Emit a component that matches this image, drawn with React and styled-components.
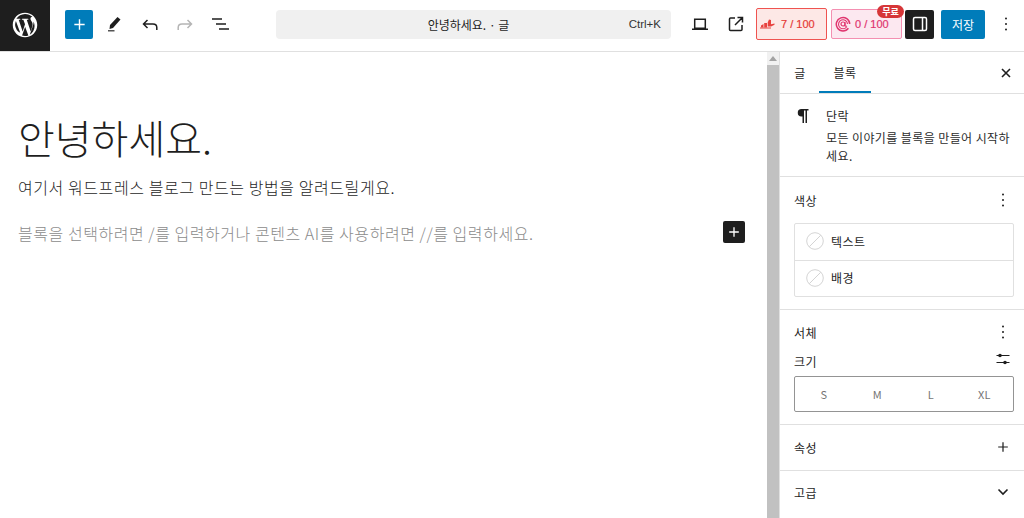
import styled, { createGlobalStyle } from "styled-components";

const GlobalStyle = createGlobalStyle`
  html, body {
    margin: 0;
    padding: 0;
    height: 100%;
    overflow: hidden;
    background: #fff;
  }
  * { box-sizing: border-box; }
  body {
    font-family: "Noto Sans CJK KR", "Noto Sans", sans-serif;
    color: #1e1e1e;
  }
`;

const Page = styled.div`
  width: 1024px;
  height: 518px;
  display: flex;
  flex-direction: column;
`;

const Header = styled.header`
  height: 52px;
  flex: none;
  display: flex;
  align-items: center;
  padding-bottom: 3px;
  border-bottom: 1px solid #e0e0e0;
`;

const LogoBox = styled.div`
  width: 50px;
  height: 51px;
  margin-bottom: -3px;
  padding-bottom: 2px;
  background: #1e1e1e;
  display: flex;
  align-items: center;
  justify-content: center;
  flex: none;
`;

const LeftTools = styled.div`
  width: 226px;
  flex: none;
  display: flex;
  align-items: center;
  padding-left: 15px;
`;

const PrimarySquare = styled.div`
  width: 28px;
  height: 29px;
  background: #007cba;
  border-radius: 2px;
  display: flex;
  align-items: center;
  justify-content: center;
  margin-right: 3px;
`;

const ToolIcon = styled.div`
  width: ${(p) => p.$w || 36}px;
  height: 36px;
  display: flex;
  align-items: center;
  justify-content: center;
  flex: none;
`;

const CommandBar = styled.div`
  width: 395px;
  height: 29px;
  flex: none;
  background: #f0f0f0;
  border-radius: 4px;
  display: flex;
  align-items: center;
  position: relative;
  justify-content: center;
  font-size: 12px;
  color: #1e1e1e;
  padding-right: 10px;
`;

const Shortcut = styled.span`
  position: absolute;
  right: 10px;
  font-family: "Liberation Sans", sans-serif;
  font-size: 11.5px;
  color: #333;
`;

const RightTools = styled.div`
  display: flex;
  align-items: center;
  margin-left: 11px;
`;

const ScoreBadge = styled.div`
  position: relative;
  width: 71px;
  height: ${(p) => p.$h}px;
  border-radius: 2px;
  border: 1px solid ${(p) => p.$line};
  background: ${(p) => p.$fill};
  color: ${(p) => p.$ink};
  display: flex;
  align-items: center;
  gap: ${(p) => p.$space}px;
  padding-left: 3px;
  margin-left: ${(p) => p.$gap || 0}px;
  font-family: "Liberation Sans", sans-serif;
  font-size: 11px;
  -webkit-text-stroke: 0.2px ${(p) => p.$ink};
  flex: none;
`;

const FreeTag = styled.span`
  position: absolute;
  top: -5px;
  right: -3px;
  width: 27px;
  height: 13px;
  border-radius: 7px;
  background: #d63638;
  color: #fff;
  -webkit-text-stroke: 0;
  font-family: "Noto Sans CJK KR", sans-serif;
  font-size: 9px;
  font-weight: 700;
  line-height: 13px;
  text-align: center;
`;

const SidebarToggle = styled.div`
  width: 29px;
  height: 29px;
  margin-left: 3px;
  background: #1e1e1e;
  border-radius: 2px;
  display: flex;
  align-items: center;
  justify-content: center;
  flex: none;
`;

const SaveButton = styled.div`
  width: 44px;
  height: 29px;
  margin-left: 7px;
  background: #007cba;
  border-radius: 2px;
  color: #fff;
  font-size: 12px;
  display: flex;
  align-items: center;
  justify-content: center;
  flex: none;
`;

const MoreSlot = styled.div`
  width: 24px;
  margin-left: 9px;
  display: flex;
  align-items: center;
  justify-content: center;
  flex: none;
`;

const Body = styled.div`
  flex: 1;
  display: flex;
  min-height: 0;
`;

const Editor = styled.main`
  width: 767px;
  flex: none;
  padding: 57px 22px 0 18px;
`;

const Title = styled.h1`
  margin: 0;
  font-size: 40px;
  font-weight: 300;
  line-height: 56px;
  color: #1e1e1e;
`;

const Paragraph = styled.p`
  margin: 11px 0 0;
  font-size: 16px;
  font-weight: 300;
  letter-spacing: 0.58px;
  line-height: 22px;
  color: #1e1e1e;
`;

const PlaceholderRow = styled.div`
  margin-top: 22px;
  height: 26px;
  display: flex;
  align-items: center;
  justify-content: space-between;
`;

const Placeholder = styled.span`
  font-size: 16px;
  font-weight: 300;
  letter-spacing: 0.55px;
  color: #8b8b8b;
`;

const InsertButton = styled.div`
  width: 22px;
  height: 22px;
  margin-bottom: 2px;
  background: #1e1e1e;
  border-radius: 2px;
  display: flex;
  align-items: center;
  justify-content: center;
`;

const ScrollTrack = styled.div`
  width: 12px;
  flex: none;
  background: #f1f1f1;
  display: flex;
  flex-direction: column;
  align-items: center;
`;

const ScrollArrow = styled.div`
  height: 13px;
  flex: none;
  display: flex;
  align-items: center;
  justify-content: center;
`;

const ScrollThumb = styled.div`
  width: 12px;
  flex: 1;
  background: #c1c1c1;
`;

const Sidebar = styled.aside`
  flex: 1;
  border-left: 1px solid #e0e0e0;
  display: flex;
  flex-direction: column;
  font-size: 12px;
  letter-spacing: 0.4px;
`;

const Tabs = styled.div`
  height: 42px;
  flex: none;
  display: flex;
  align-items: stretch;
  border-bottom: 1px solid #e0e0e0;
  padding-left: 1px;
`;

const Tab = styled.div`
  width: ${(p) => p.$w}px;
  display: flex;
  align-items: center;
  justify-content: center;
  box-shadow: ${(p) => (p.$active ? "inset 0 -2px 0 #007cba" : "none")};
`;

const CloseSlot = styled.div`
  margin-left: auto;
  width: 36px;
  display: flex;
  align-items: center;
  justify-content: center;
`;

const BlockCard = styled.section`
  height: 83px;
  flex: none;
  display: flex;
  padding: 14px 10px 0 16px;
  border-bottom: 1px solid #e0e0e0;
`;

const BlockIcon = styled.div`
  width: 30px;
  flex: none;
`;

const BlockName = styled.div`
  line-height: 16px;
`;

const BlockDesc = styled.div`
  margin-top: 5px;
  line-height: 18px;
  color: #2c2c2c;
`;

const Panel = styled.section`
  height: ${(p) => p.$h}px;
  flex: none;
  padding: 0 10px 0 14px;
  border-bottom: ${(p) => (p.$last ? "none" : "1px solid #e0e0e0")};
`;

const PanelHead = styled.div`
  height: ${(p) => p.$h}px;
  display: flex;
  align-items: center;
  justify-content: space-between;
  color: #1e1e1e;
`;

const HeadIcon = styled.div`
  width: 20px;
  margin-right: 1px;
  display: flex;
  align-items: center;
  justify-content: center;
`;

const ColorList = styled.div`
  border: 1px solid #e0e0e0;
  border-radius: 2px;
`;

const ColorRow = styled.div`
  height: 36px;
  display: flex;
  align-items: center;
  gap: 7px;
  padding: 0 0 2px 11px;
  border-top: ${(p) => (p.$first ? "none" : "1px solid #e0e0e0")};
`;

const SizeLabelRow = styled.div`
  height: 20px;
  margin-top: -3px;
  display: flex;
  align-items: center;
  justify-content: space-between;
`;

const SizeControl = styled.div`
  margin-top: 5px;
  height: 36px;
  border: 1px solid #949494;
  border-radius: 2px;
  display: grid;
  grid-template-columns: repeat(4, 53.5px);
  padding-left: 2px;
`;

const SizeOption = styled.div`
  display: flex;
  align-items: center;
  justify-content: center;
  font-size: 11px;
  letter-spacing: 0;
  color: #757575;
`;

const WpLogo = () => (
  <svg width="28" height="28" viewBox="0 0 24 24" fill="#fff">
    <path d="M12 1.500C6.200 1.500 1.500 6.200 1.500 12S6.200 22.500 12 22.500 22.500 17.800 22.500 12 17.800 1.500 12 1.500zm0 1c2.500 0 4.700 1 6.400 2.500h-.1c-.9 0-1.600.8-1.600 1.700 0 .8.5 1.400 1 2.200.4.6.8 1.400.8 2.600 0 .8-.3 1.700-.7 3l-.9 3.100-3.400-10.100c.6 0 1.100-.1 1.100-.1.5-.1.5-.8 0-.8 0 0-1.500.1-2.500.1-.9 0-2.400-.1-2.400-.1-.5 0-.6.8-.1.8 0 0 .5.1 1 .1l1.400 3.900-2 6.100-3.400-10c.6 0 1.100-.1 1.100-.1.5-.1.5-.8 0-.8 0 0-1.500.1-2.500.1h-.6A9.500 9.500 0 0 1 12 2.500zM3.500 12c0-1.200.3-2.400.7-3.400l3.700 10.100A8.500 8.500 0 0 1 3.500 12zm8.500 9.500c-.9 0-1.700-.1-2.500-.4l2.600-7.700 2.700 7.400c0 0 0 .1.1.1-.9.400-1.900.6-2.900.6zm4.100-1.200 2.600-7.500c.5-1.200.6-2.200.6-3 0-.3 0-.6-.1-.9.7 1.200 1 2.600 1 4.100 0 3.100-1.700 5.800-4.100 7.300z" />
  </svg>
);

const Plus = ({ size = 16, color = "#fff", width = 1.5 }) => (
  <svg width={size} height={size} viewBox="0 0 16 16" fill="none" stroke={color} strokeWidth={width}>
    <path d="M8 2.500v11M2.500 8h11" />
  </svg>
);

const Pencil = () => (
  <svg width="24" height="24" viewBox="0 0 24 24" fill="#1e1e1e">
    <path d="M15.500 5 18.500 7.500 11 16l-3.500 1 .5-4z" />
    <rect x="6" y="18" width="6.500" height="1.500" fill="#555" />
  </svg>
);

const Arrow = ({ color, flip }) => (
  <svg
    width="24"
    height="24"
    viewBox="0 0 24 24"
    fill="none"
    stroke={color}
    strokeWidth="1.500"
    style={flip ? { transform: "scaleX(-1)" } : undefined}
  >
    <path d="M9.500 8 5.500 12l4 4M5.500 12h9.500c2.200 0 3.800 1.400 3.800 3.500V18" />
  </svg>
);

const ListView = () => (
  <svg width="24" height="24" viewBox="0 0 24 24" fill="none" stroke="#1e1e1e" strokeWidth="1.500">
    <path d="M4 7h10M8 12h10M11 17h10" />
  </svg>
);

const Laptop = () => (
  <svg width="24" height="24" viewBox="0 0 24 24" fill="none" stroke="#1e1e1e" strokeWidth="1.500">
    <path d="M6.700 7.200h10.600v9H6.700zM4 17.200h16" />
  </svg>
);

const External = () => (
  <svg width="24" height="24" viewBox="0 0 24 24" fill="none" stroke="#1e1e1e" strokeWidth="1.500">
    <path d="M11 6H6.500A1 1 0 0 0 5.500 7v10.500a1 1 0 0 0 1 1H17a1 1 0 0 0 1-1V13M11 13l7.500-7.500M13.500 5.500h5v5" />
  </svg>
);

const ChartIcon = () => (
  <svg width="15" height="12" viewBox="0 0 15 12" fill="#e8423f">
    <path d="M1 7.500 3.500 6v3.500H1zM4.200 5H7v4.500H4.200zM7.700 4.500 9 1.500l2 .5v4.200l3.500-.7v1.300L11 8.500H7.700z" />
    <rect x="0" y="9.500" width="11" height="1" />
  </svg>
);

const TargetIcon = () => (
  <svg width="16" height="16" viewBox="0 0 16 16" fill="none" stroke="#e0356f">
    <path d="M13.400 12.200A6.700 6.700 0 1 1 14.700 8" strokeWidth="1.500" />
    <path d="M11.600 11A4.500 4.500 0 1 1 12.500 8" strokeWidth="1.100" />
    <circle cx="8" cy="8" r="2" strokeWidth="1.200" />
    <path d="M10 6v3.200c0 1 1.200 1.300 2 .8" strokeWidth="1.100" />
  </svg>
);

const SidebarIcon = () => (
  <svg width="20" height="20" viewBox="0 0 20 20" fill="none" stroke="#fff" strokeWidth="1.500">
    <rect x="3.500" y="3.500" width="13" height="13" rx="1.500" />
    <path d="M12.500 3.500v13" />
  </svg>
);

const Dots = () => (
  <svg width="4" height="16" viewBox="0 0 4 16" fill="#1e1e1e">
    <circle cx="2" cy="2.500" r="1" />
    <circle cx="2" cy="8" r="1" />
    <circle cx="2" cy="13.500" r="1" />
  </svg>
);

const Close = () => (
  <svg width="12" height="12" viewBox="0 0 12 12" fill="none" stroke="#1e1e1e" strokeWidth="1.600">
    <path d="M2 2l8 8M10 2l-8 8" />
  </svg>
);

const Pilcrow = () => (
  <svg width="14" height="16" viewBox="0 0 14 16" fill="#1e1e1e">
    <path d="M5.500 1h7v1.500H11V15H9.500V2.500H8V15H6.500V8.500h-1a3.750 3.750 0 0 1 0-7.500z" />
  </svg>
);

const NoColor = () => (
  <svg width="18" height="18" viewBox="0 0 18 18" fill="none" stroke="#d4d4d4" strokeWidth="1">
    <circle cx="9" cy="9" r="8.300" />
    <path d="M3.300 14.700 14.700 3.300" />
  </svg>
);

const Sliders = () => (
  <svg width="16" height="14" viewBox="0 0 16 14" fill="#1e1e1e" style={{ marginTop: -4 }}>
    <rect x="1.500" y="3" width="13" height="1" />
    <rect x="1.500" y="10" width="13" height="1" />
    <circle cx="5" cy="3.500" r="1.800" />
    <circle cx="10" cy="10.500" r="1.800" />
  </svg>
);

const Chevron = () => (
  <svg width="12" height="8" viewBox="0 0 12 8" fill="none" stroke="#1e1e1e" strokeWidth="1.600">
    <path d="M1.500 1.500 6 6l4.500-4.500" />
  </svg>
);

const UpArrow = () => (
  <svg width="8" height="5" viewBox="0 0 8 5" fill="#a3a3a3">
    <path d="M4 0l4 5H0z" />
  </svg>
);

const sizes = ["S", "M", "L", "XL"];

const App = () => (
  <Page>
    <GlobalStyle />
    <Header>
      <LogoBox>
        <WpLogo />
      </LogoBox>
      <LeftTools>
        <PrimarySquare>
          <Plus size={15} />
        </PrimarySquare>
        <ToolIcon><Pencil /></ToolIcon>
        <ToolIcon $w={35}><Arrow color="#1e1e1e" /></ToolIcon>
        <ToolIcon $w={35}><Arrow color="#b5b5b5" flip /></ToolIcon>
        <ToolIcon><ListView /></ToolIcon>
      </LeftTools>
      <CommandBar>
        안녕하세요. · 글
        <Shortcut>Ctrl+K</Shortcut>
      </CommandBar>
      <RightTools>
        <ToolIcon><Laptop /></ToolIcon>
        <ToolIcon $w={35}><External /></ToolIcon>
        <ScoreBadge $h={32} $space={6} $line="#ef5350" $fill="#fde8e6" $ink="#e53935" $gap={3}>
          <ChartIcon />
          <span>7 / 100</span>
        </ScoreBadge>
        <ScoreBadge $h={30} $space={4} $line="#f48fb1" $fill="#fce8f0" $ink="#e0356f" $gap={4}>
          <TargetIcon />
          <span>0 / 100</span>
          <FreeTag>무료</FreeTag>
        </ScoreBadge>
        <SidebarToggle><SidebarIcon /></SidebarToggle>
        <SaveButton>저장</SaveButton>
        <MoreSlot><Dots /></MoreSlot>
      </RightTools>
    </Header>
    <Body>
      <Editor>
        <Title>안녕하세요.</Title>
        <Paragraph>여기서 워드프레스 블로그 만드는 방법을 알려드릴게요.</Paragraph>
        <PlaceholderRow>
          <Placeholder>블록을 선택하려면 /를 입력하거나 콘텐츠 AI를 사용하려면 //를 입력하세요.</Placeholder>
          <InsertButton>
            <Plus size={14} />
          </InsertButton>
        </PlaceholderRow>
      </Editor>
      <ScrollTrack>
        <ScrollArrow><UpArrow /></ScrollArrow>
        <ScrollThumb />
      </ScrollTrack>
      <Sidebar>
        <Tabs>
          <Tab $w={38}>글</Tab>
          <Tab $w={52} $active>블록</Tab>
          <CloseSlot><Close /></CloseSlot>
        </Tabs>
        <BlockCard>
          <BlockIcon><Pilcrow /></BlockIcon>
          <div>
            <BlockName>단락</BlockName>
            <BlockDesc>모든 이야기를 블록을 만들어 시작하세요.</BlockDesc>
          </div>
        </BlockCard>
        <Panel $h={133}>
          <PanelHead $h={46}>
            색상
            <HeadIcon><Dots /></HeadIcon>
          </PanelHead>
          <ColorList>
            <ColorRow $first><NoColor />텍스트</ColorRow>
            <ColorRow><NoColor />배경</ColorRow>
          </ColorList>
        </Panel>
        <Panel $h={115}>
          <PanelHead $h={44}>
            서체
            <HeadIcon><Dots /></HeadIcon>
          </PanelHead>
          <SizeLabelRow>
            크기
            <HeadIcon><Sliders /></HeadIcon>
          </SizeLabelRow>
          <SizeControl>
            {sizes.map((s) => <SizeOption key={s}>{s}</SizeOption>)}
          </SizeControl>
        </Panel>
        <Panel $h={46}>
          <PanelHead $h={44}>
            속성
            <HeadIcon><Plus size={14} color="#1e1e1e" width={1.4} /></HeadIcon>
          </PanelHead>
        </Panel>
        <Panel $h={47} $last>
          <PanelHead $h={42}>
            고급
            <HeadIcon><Chevron /></HeadIcon>
          </PanelHead>
        </Panel>
      </Sidebar>
    </Body>
  </Page>
);

export default App;
